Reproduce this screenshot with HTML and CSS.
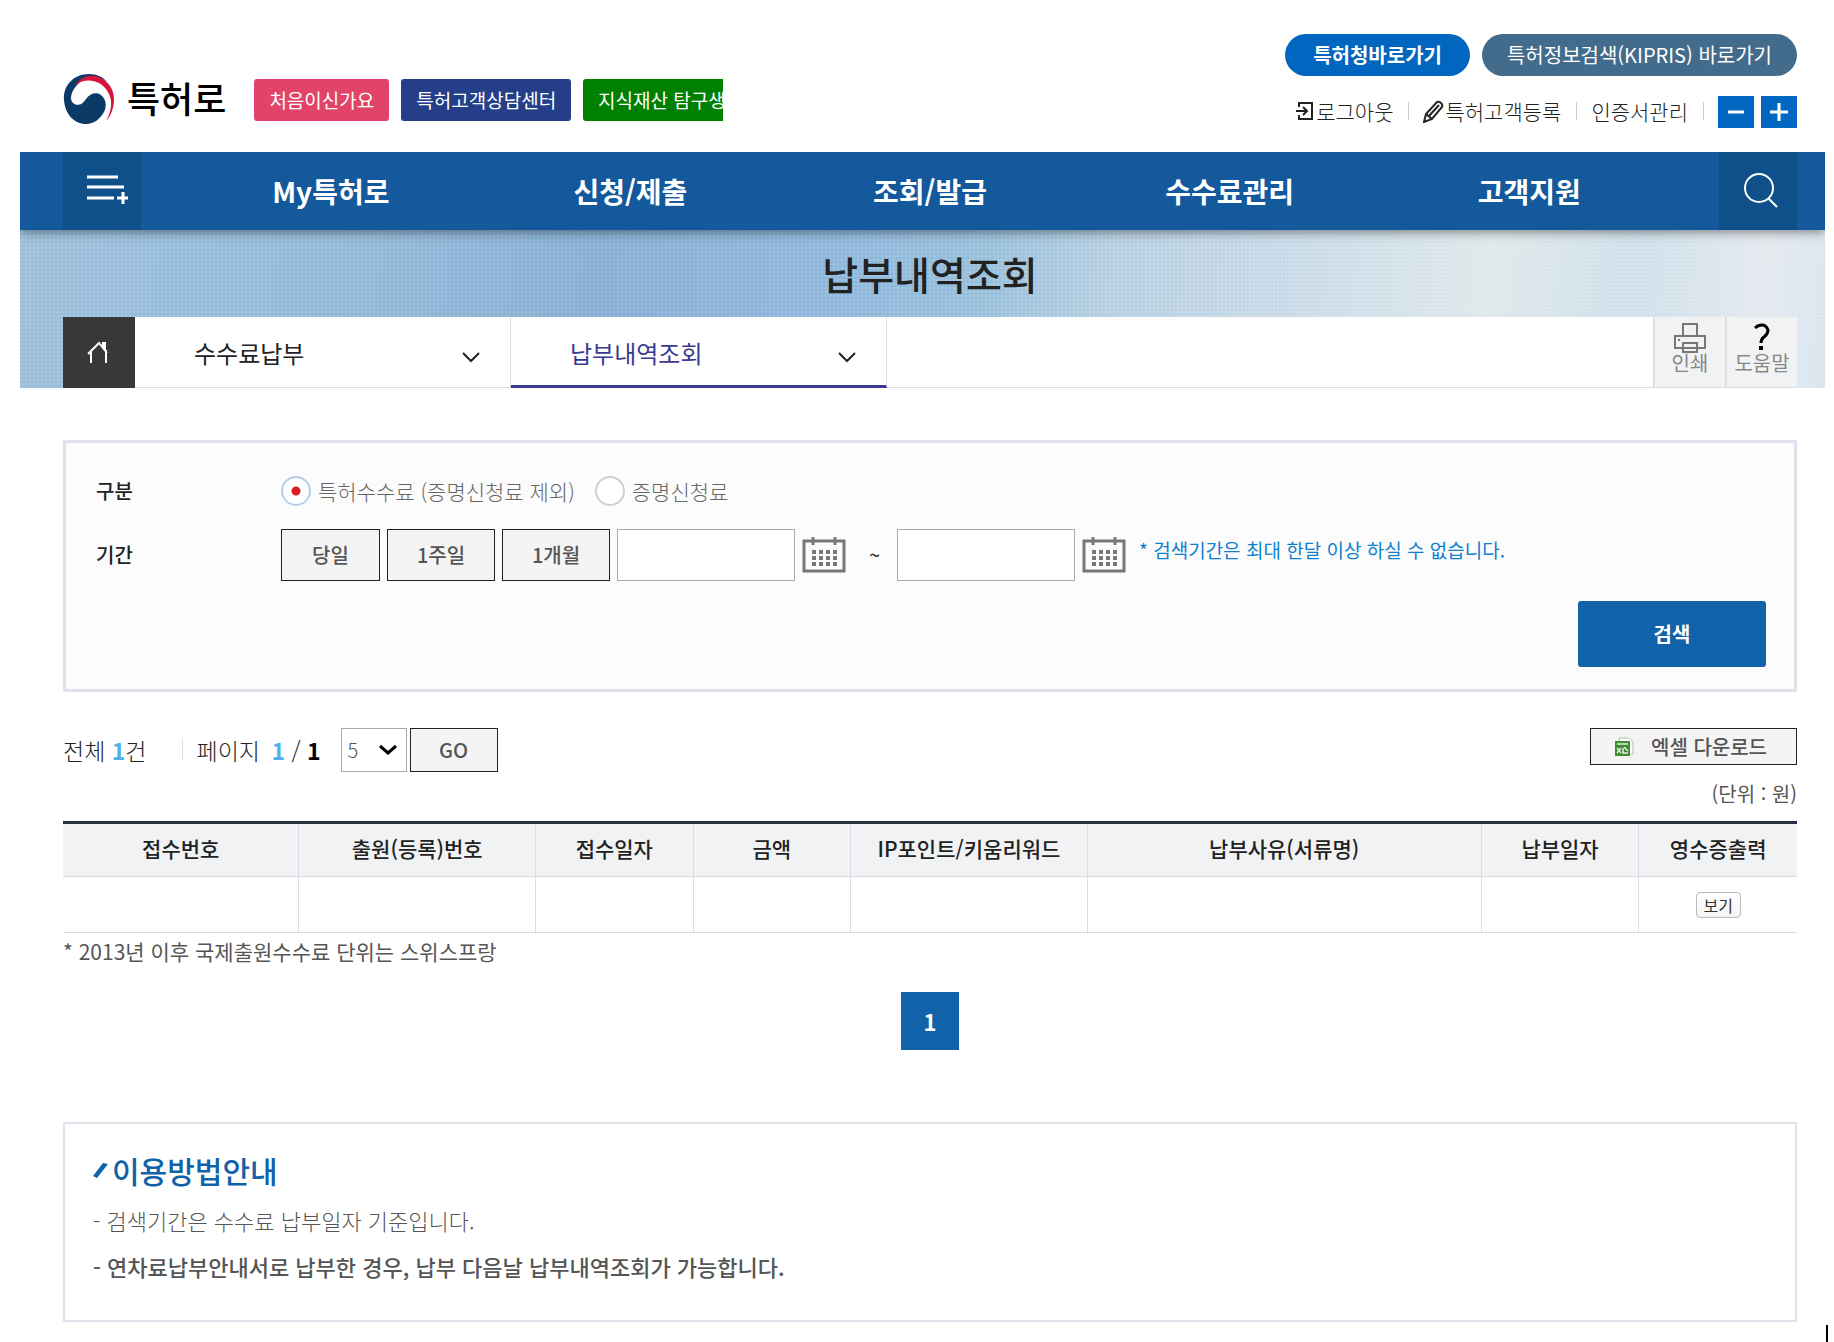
FILE: index.html
```html
<!DOCTYPE html>
<html lang="ko">
<head>
    <meta charset="UTF-8">
    <meta name="viewport" content="width=device-width, initial-scale=1.0">
    <title>납부내역조회 | 특허로</title>
    <link rel="stylesheet" href="styles.css">
</head>
<body>
<div class="page">
    <header class="header inner">
        <div class="brand">
            <a class="logo" href="#">
                <svg width="52" height="52" viewBox="0 0 52 52" aria-hidden="true">
                    <path fill="#0b3a67" d="M1 27C0 12 11 1 26 1c8 0 14 3 18 8C36 3 24 3 16 10 8 17 6 27 10 30c5 4 10 1 13-4 4-6 11-7 15-4 5 4 6 11 3 17-4 7-10 12-18 12C11 51 2 41 1 27z"/>
                    <path fill="#d6133a" d="M12 12C18 4 27 1 36 4c9 4 15 12 15 22 0 9-3 17-8 22 5-8 7-19 3-27C40 8 25 3 12 12z"/>
                </svg>
                <span>특허로</span>
            </a>
            <div class="badges">
                <a class="badge pink" href="#">처음이신가요</a>
                <a class="badge navy" href="#">특허고객상담센터</a>
                <a class="badge green" href="#">지식재산 탐구생활</a>
            </div>
        </div>
        <div class="header-right">
            <div class="pills">
                <a class="pill strong" href="#">특허청바로가기</a>
                <a class="pill slate" href="#">특허정보검색(KIPRIS) 바로가기</a>
            </div>
            <div class="util">
                <a href="#">
                    <svg width="20" height="20" viewBox="0 0 20 20" fill="none" stroke="#222" stroke-width="2" aria-hidden="true"><path d="M4 6V2h13v16H4v-4M1 10h11M8 6l4 4-4 4"/></svg>로그아웃</a>
                <a href="#">
                    <svg width="21" height="23" viewBox="0 0 21 23" fill="none" stroke="#222" stroke-width="2" aria-hidden="true"><path d="M1 22l2-8L14 2q2-1 4 1t1 4L9 19zM3 14l6 5M6 16L16 5"/></svg>특허고객등록</a>
                <a href="#">인증서관리</a>
                <div class="zoom">
                    <button type="button" aria-label="축소"><svg width="20" height="20" viewBox="0 0 20 20" stroke="#fff" stroke-width="3"><path d="M2 10h16"/></svg></button>
                    <button type="button" aria-label="확대"><svg width="20" height="20" viewBox="0 0 20 20" stroke="#fff" stroke-width="3"><path d="M1 10h18M10 1v18"/></svg></button>
                </div>
            </div>
        </div>
    </header>

    <nav class="gnb inner">
        <button class="gnb-btn" type="button" aria-label="전체메뉴">
            <svg width="46" height="38" viewBox="-4 0 46 38" fill="none" stroke="#fff" stroke-width="3" aria-hidden="true"><path d="M1 5h31M1 15h37M1 26h27"/><path d="M31 26h11M37 20v12"/></svg>
        </button>
        <ul class="gnb-list">
            <li><a href="#">My특허로</a></li>
            <li><a href="#">신청/제출</a></li>
            <li><a href="#">조회/발급</a></li>
            <li><a href="#">수수료관리</a></li>
            <li><a href="#">고객지원</a></li>
        </ul>
        <button class="gnb-btn" type="button" aria-label="검색">
            <svg width="36" height="36" viewBox="0 0 36 36" fill="none" stroke="#fff" stroke-width="2" aria-hidden="true"><circle cx="16" cy="15" r="14"/><path d="M25 25l9 9"/></svg>
        </button>
    </nav>

    <div class="visual inner">
        <h1>납부내역조회</h1>
        <div class="location">
            <a class="home" href="#" aria-label="홈">
                <svg width="24" height="24" viewBox="0 0 24 24" fill="none" stroke="#fff" stroke-width="2" aria-hidden="true"><path d="M4 22V11M19 22V9M1 13L12 2l8 10M16 7V2h2v7"/></svg>
            </a>
            <button class="depth" type="button">수수료납부
                <svg width="18" height="12" viewBox="0 0 18 12" fill="none" stroke="#222" stroke-width="2" aria-hidden="true"><path d="M1 2l8 8 8-8"/></svg>
            </button>
            <button class="depth active" type="button">납부내역조회
                <svg width="18" height="12" viewBox="0 0 18 12" fill="none" stroke="#222" stroke-width="2" aria-hidden="true"><path d="M1 2l8 8 8-8"/></svg>
            </button>
            <div class="tools">
                <button type="button">
                    <svg width="32" height="30" viewBox="0 0 32 30" fill="#f0f2f3" stroke="#777" stroke-width="2" aria-hidden="true"><path d="M9 14V1h14v13M1 13h30v12H1zM9 20h14v9H9z"/><path d="M4 17h2"/></svg>
                    <span>인쇄</span>
                </button>
                <button type="button">
                    <svg width="20" height="30" viewBox="0 0 20 30" fill="none" stroke="#000" stroke-width="3" aria-hidden="true"><path d="M3 5q3-3 7-3t6 5q0 4-4 7-3 2-3 6"/><path stroke-width="4" d="M7 25h4"/></svg>
                    <span>도움말</span>
                </button>
            </div>
        </div>
    </div>

    <main class="content inner">
        <form class="search-box">
            <div class="row type-row" role="radiogroup" aria-labelledby="type-label">
                <span class="row-label" id="type-label">구분</span>
                <label class="radio"><input type="radio" name="type" checked>특허수수료 (증명신청료 제외)</label>
                <label class="radio"><input type="radio" name="type">증명신청료</label>
            </div>
            <div class="row date-row">
                <label class="row-label" for="from">기간</label>
                <button class="btn" type="button">당일</button>
                <button class="btn wide" type="button">1주일</button>
                <button class="btn wide" type="button">1개월</button>
                <input class="date" type="text" id="from">
                <button class="calendar" type="button" aria-label="시작일 선택">
                    <svg width="44" height="36" viewBox="0 0 44 36" fill="none" stroke="#777" stroke-width="3" aria-hidden="true"><path d="M2 4h40v30H2zM11 0v8M33 0v8"/><path stroke-width="4" stroke-dasharray="4 3" d="M10 15h25M10 21h25M10 27h25"/></svg>
                </button>
                <span class="tilde">~</span>
                <input class="date" type="text" id="to" aria-label="종료일">
                <button class="calendar" type="button" aria-label="종료일 선택">
                    <svg width="44" height="36" viewBox="0 0 44 36" fill="none" stroke="#777" stroke-width="3" aria-hidden="true"><path d="M2 4h40v30H2zM11 0v8M33 0v8"/><path stroke-width="4" stroke-dasharray="4 3" d="M10 15h25M10 21h25M10 27h25"/></svg>
                </button>
                <span class="hint">* 검색기간은 최대 한달 이상 하실 수 없습니다.</span>
            </div>
            <button class="submit" type="submit">검색</button>
        </form>

        <div class="list-top">
            <div class="paging-info">
                <span class="total">전체 <b>1</b>건</span>
                <span class="pages">페이지 <b>1</b> / <strong>1</strong></span>
                <div class="page-size">
                    <select aria-label="페이지당 건수">
                        <option>5</option>
                        <option>10</option>
                    </select>
                    <svg width="18" height="12" viewBox="0 0 18 12" fill="none" stroke="#000" stroke-width="3" aria-hidden="true"><path d="M1 2l8 7 8-7"/></svg>
                </div>
                <button class="btn go" type="button">GO</button>
            </div>
            <div class="list-right">
                <button class="btn excel" type="button">
                    <svg width="19" height="19" viewBox="0 0 19 19" aria-hidden="true"><path fill="#fff" stroke="#b5bbb5" d="M4 1h10l4 4v12H4z"/><path fill="#3f8f32" d="M0 4h15v15H0z"/><path stroke="#dff0da" stroke-width="1.5" fill="none" d="M2 7h11M2 11l4 5M6 11l-4 5M8 11v5h5M9 10l4 4"/></svg>
                    엑셀 다운로드
                </button>
                <p class="unit">(단위 : 원)</p>
            </div>
        </div>

        <table class="list">
            <colgroup>
                <col class="c3"><col class="c3"><col class="c2"><col class="c2"><col class="c3"><col class="c5"><col class="c2"><col class="c2">
            </colgroup>
            <thead>
            <tr>
                <th>접수번호</th>
                <th>출원(등록)번호</th>
                <th>접수일자</th>
                <th>금액</th>
                <th>IP포인트/키움리워드</th>
                <th>납부사유(서류명)</th>
                <th>납부일자</th>
                <th>영수증출력</th>
            </tr>
            </thead>
            <tbody>
            <tr>
                <td></td>
                <td></td>
                <td></td>
                <td></td>
                <td></td>
                <td></td>
                <td></td>
                <td><button class="view" type="button">보기</button></td>
            </tr>
            </tbody>
        </table>
        <p class="note">* 2013년 이후 국제출원수수료 단위는 스위스프랑</p>

        <div class="pager"><a href="#" aria-current="page">1</a></div>

        <section class="guide">
            <h2>
                <svg width="15" height="16" viewBox="0 0 15 16" aria-hidden="true"><path fill="#1162a9" d="M0 14L10 1l5 1L4 16z"/></svg>이용방법안내</h2>
            <ul>
                <li>- 검색기간은 수수료 납부일자 기준입니다.</li>
                <li class="em">- 연차료납부안내서로 납부한 경우, 납부 다음날 납부내역조회가 가능합니다.</li>
            </ul>
        </section>
    </main>
</div>
<div class="caret"></div>
</body>
</html>
```
FILE: styles.css
```css
:root {
    --blue: #1162a9;
    --nav: #13599b;
    --nav-dark: #10508a;
    --sky: #0066bf;
    --line: #dfe2ea;
    --text: #222;
    --gray: #666;
}

* {
    margin: 0;
    padding: 0;
    box-sizing: border-box;
}

body {
    background: #fff;
    color: var(--text);
    font-family: "Noto Sans CJK KR", "Noto Sans", sans-serif;
    font-size: 21px;
    line-height: 30px;
}

a {
    color: inherit;
    text-decoration: none;
}

ul {
    list-style: none;
}

button,
input,
select {
    font: inherit;
    color: inherit;
    border: 0;
    border-radius: 0;
    background: none;
}

button {
    cursor: pointer;
}

svg {
    display: block;
    flex: none;
}

.page {
    margin: 0 9px 0 20px;
}

.inner {
    padding-left: 43px;
    padding-right: 28px;
}

/* header */
.header {
    display: flex;
    justify-content: space-between;
    align-items: flex-end;
    padding-top: 34px;
    padding-bottom: 24px;
}

.brand {
    display: flex;
    align-items: center;
    gap: 28px;
}

.logo {
    display: flex;
    align-items: center;
    gap: 12px;
    height: 56px;
    padding-bottom: 2px;
    color: #000;
    font-size: 36px;
    font-weight: 500;
}

.logo span {
    padding-bottom: 4px;
}

.badges {
    display: flex;
    gap: 12px;
    width: 469px;
    overflow: hidden;
}

.badge {
    flex: none;
    padding: 0 15px;
    border-radius: 3px;
    color: #fff;
    font-size: 19px;
    line-height: 42px;
    white-space: nowrap;
}

.pink { background: #e14468; }
.navy { background: #243f87; }
.green { background: #008000; }

.header-right {
    display: flex;
    flex-direction: column;
    align-items: flex-end;
    gap: 20px;
}

.pills {
    display: flex;
    gap: 12px;
}

.pill {
    padding: 0 28px;
    border-radius: 21px;
    color: #fff;
    font-size: 20px;
    line-height: 42px;
}

.strong {
    background: var(--sky);
    font-weight: 700;
}

.slate {
    padding: 0 25px;
    background: #426b8c;
}

.util {
    display: flex;
    align-items: center;
    font-weight: 300;
}

.util a {
    display: flex;
    align-items: center;
    gap: 1px;
    margin-right: 14px;
    padding-bottom: 2px;
}

.util a::after {
    content: "";
    width: 1px;
    height: 18px;
    margin-left: 14px;
    background: #ccc;
}

.zoom {
    display: flex;
    gap: 7px;
}

.zoom button {
    display: flex;
    align-items: center;
    justify-content: center;
    width: 36px;
    height: 32px;
    background: var(--sky);
}

/* main menu */
.gnb {
    position: relative;
    display: flex;
    height: 78px;
    background: var(--nav);
    box-shadow: 0 2px 10px rgba(0, 0, 0, 0.45);
    clip-path: inset(0 0 -14px 0);
}

.gnb-btn {
    display: flex;
    align-items: center;
    justify-content: center;
    width: 78px;
    padding-left: 6px;
    background: var(--nav-dark);
}

.gnb-list {
    display: flex;
    flex: 1;
    padding: 0 40px;
}

.gnb-list li {
    flex: 1;
    color: #fff;
    font-size: 28px;
    font-weight: 700;
    line-height: 78px;
    text-align: center;
}

/* page title */
.visual {
    background:
        radial-gradient(circle, rgba(255, 255, 255, 0.18) 1px, transparent 1px) 0 0 / 4px 4px,
        linear-gradient(96deg, #9cbfdb 0%, #92b9d9 18%, #86afd3 32%, #8fb8dc 46%, #98bfdb 53%, #b6cfe2 60%, #c9dbe8 70%, #dfe8eb 81%, #cfe0ea 89%, #e4e9ef 96%, #d8e5ef 100%);
}

.visual h1 {
    font-size: 39px;
    font-weight: 500;
    line-height: 87px;
    text-align: center;
}

.location {
    display: flex;
    height: 71px;
    background: #fff;
    border-bottom: 1px solid #ddd;
}

.home {
    display: flex;
    align-items: center;
    justify-content: center;
    width: 72px;
    height: 71px;
    background: #383838;
}

.depth {
    display: flex;
    align-items: center;
    justify-content: space-between;
    width: 376px;
    height: 71px;
    padding: 0 30px 0 59px;
    border-right: 1px solid #ddd;
    font-size: 24px;
}

.depth svg {
    margin-top: 8px;
}

.active {
    padding-top: 3px;
    border-bottom: 3px solid #3a3b8f;
    color: #3a3b8f;
}

.tools {
    display: flex;
    margin-left: auto;
}

.tools button {
    display: flex;
    flex-direction: column;
    align-items: center;
    width: 72px;
    padding-top: 6px;
    border-left: 2px solid #e0e0e0;
    background: #f0f2f3;
    color: #888;
    font-size: 20px;
    line-height: 20px;
}

/* search form */
.content {
    padding-top: 52px;
}

.search-box {
    display: flex;
    flex-direction: column;
    padding: 26px 28px 22px 30px;
    border: 3px solid var(--line);
    background: #fcfcfc;
}

.row {
    display: flex;
    align-items: center;
}

.row-label {
    width: 185px;
    font-size: 20px;
    font-weight: 500;
}

.type-row {
    height: 44px;
    margin-bottom: 16px;
    color: var(--gray);
    font-weight: 300;
}

.type-row .row-label {
    color: var(--text);
}

.radio {
    display: flex;
    align-items: center;
    gap: 7px;
    margin-right: 20px;
}

.radio input {
    appearance: none;
    width: 30px;
    height: 30px;
    border: 2px solid #ccd0d4;
    border-radius: 50%;
    background: #fff;
}

.radio input:checked {
    border-color: #b9cde8;
    background: radial-gradient(circle, #d81f1f 4px, #fff 5px);
}

.date-row {
    gap: 7px;
    margin-bottom: 20px;
}

.date-row .row-label {
    width: 178px;
}

.btn {
    border: 1px solid #222;
    background: #f4f4f4;
    color: #555;
    font-size: 20px;
    font-weight: 500;
}

.date-row .btn {
    width: 99px;
    height: 52px;
}

.date-row .wide {
    width: 108px;
}

.date {
    width: 178px;
    height: 52px;
    padding: 0 10px;
    border: 1px solid #aaa;
    background: #fff;
}

.tilde {
    width: 37px;
    padding-left: 6px;
    font-size: 20px;
    text-align: center;
}

.hint {
    margin: 0 0 10px 6px;
    color: #0f80d0;
    font-size: 19px;
}

.submit {
    align-self: flex-end;
    width: 188px;
    height: 66px;
    border-radius: 3px;
    background: var(--blue);
    color: #fff;
    font-size: 20px;
    font-weight: 700;
}

/* list */
.list-top {
    display: flex;
    justify-content: space-between;
    margin-top: 36px;
}

.paging-info {
    display: flex;
    align-items: center;
    height: 44px;
    font-size: 23px;
    font-weight: 300;
}

.paging-info b {
    color: #53b0e8;
    font-weight: 700;
}

.paging-info strong {
    color: #000;
    font-weight: 700;
}

.pages {
    margin-left: 35px;
    padding-left: 15px;
    background: linear-gradient(#ddd, #ddd) left center / 1px 22px no-repeat;
}

.pages b {
    margin-left: 5px;
}

.page-size {
    display: flex;
    align-items: center;
    margin: 0 3px 0 20px;
}

.page-size select {
    appearance: none;
    width: 66px;
    height: 44px;
    padding: 0 6px;
    border: 1px solid #aaa;
    background: #fff;
    color: #555;
    font-size: 20px;
}

.page-size svg {
    margin-left: -28px;
    margin-right: 10px;
    pointer-events: none;
}

.go {
    width: 88px;
    height: 44px;
}

.list-right {
    display: flex;
    flex-direction: column;
    align-items: flex-end;
}

.excel {
    display: flex;
    align-items: center;
    justify-content: center;
    gap: 17px;
    width: 207px;
    height: 37px;
    padding-right: 5px;
}

.unit {
    margin: 14px 0 12px;
    color: #555;
    font-size: 20px;
}

.list {
    width: 100%;
    table-layout: fixed;
    border-collapse: separate;
    border-spacing: 0;
    border-top: 3px solid #2a2f42;
}

.c2 { width: 9.09%; }
.c3 { width: 13.64%; }
.c5 { width: 22.73%; }

.list th,
.list td {
    padding-bottom: 4px;
    border-right: 1px solid #d8dce6;
    border-bottom: 1px solid #d8dce6;
    text-align: center;
    vertical-align: middle;
    white-space: nowrap;
}

.list th:last-child,
.list td:last-child {
    border-right: 0;
}

.list th {
    height: 53px;
    background: #f0f2f4;
    font-size: 21px;
    font-weight: 500;
}

.list td {
    height: 56px;
}

.view {
    width: 45px;
    height: 26px;
    border: 1px solid #bbb;
    border-radius: 4px;
    background: linear-gradient(#fff, #f4f4f4);
    color: #333;
    font-size: 16px;
    line-height: 20px;
}

.note {
    margin-top: 3px;
    color: #555;
}

.pager {
    display: flex;
    justify-content: center;
    margin: 26px 0 72px;
}

.pager a {
    width: 58px;
    background: var(--blue);
    color: #fff;
    font-size: 22px;
    font-weight: 700;
    line-height: 58px;
    text-align: center;
}

/* guide */
.guide {
    padding: 24px 28px 31px;
    border: 2px solid var(--line);
}

.guide h2 {
    display: flex;
    align-items: center;
    gap: 4px;
    color: var(--blue);
    font-size: 30px;
    font-weight: 500;
    line-height: 44px;
}

.guide ul {
    margin-top: 5px;
}

.guide li {
    color: #555;
    font-size: 22px;
    font-weight: 300;
    line-height: 46px;
}

.guide .em {
    font-weight: 500;
}

.caret {
    width: 2px;
    height: 17px;
    margin: 3px 6px 0 auto;
    background: #000;
}
```
